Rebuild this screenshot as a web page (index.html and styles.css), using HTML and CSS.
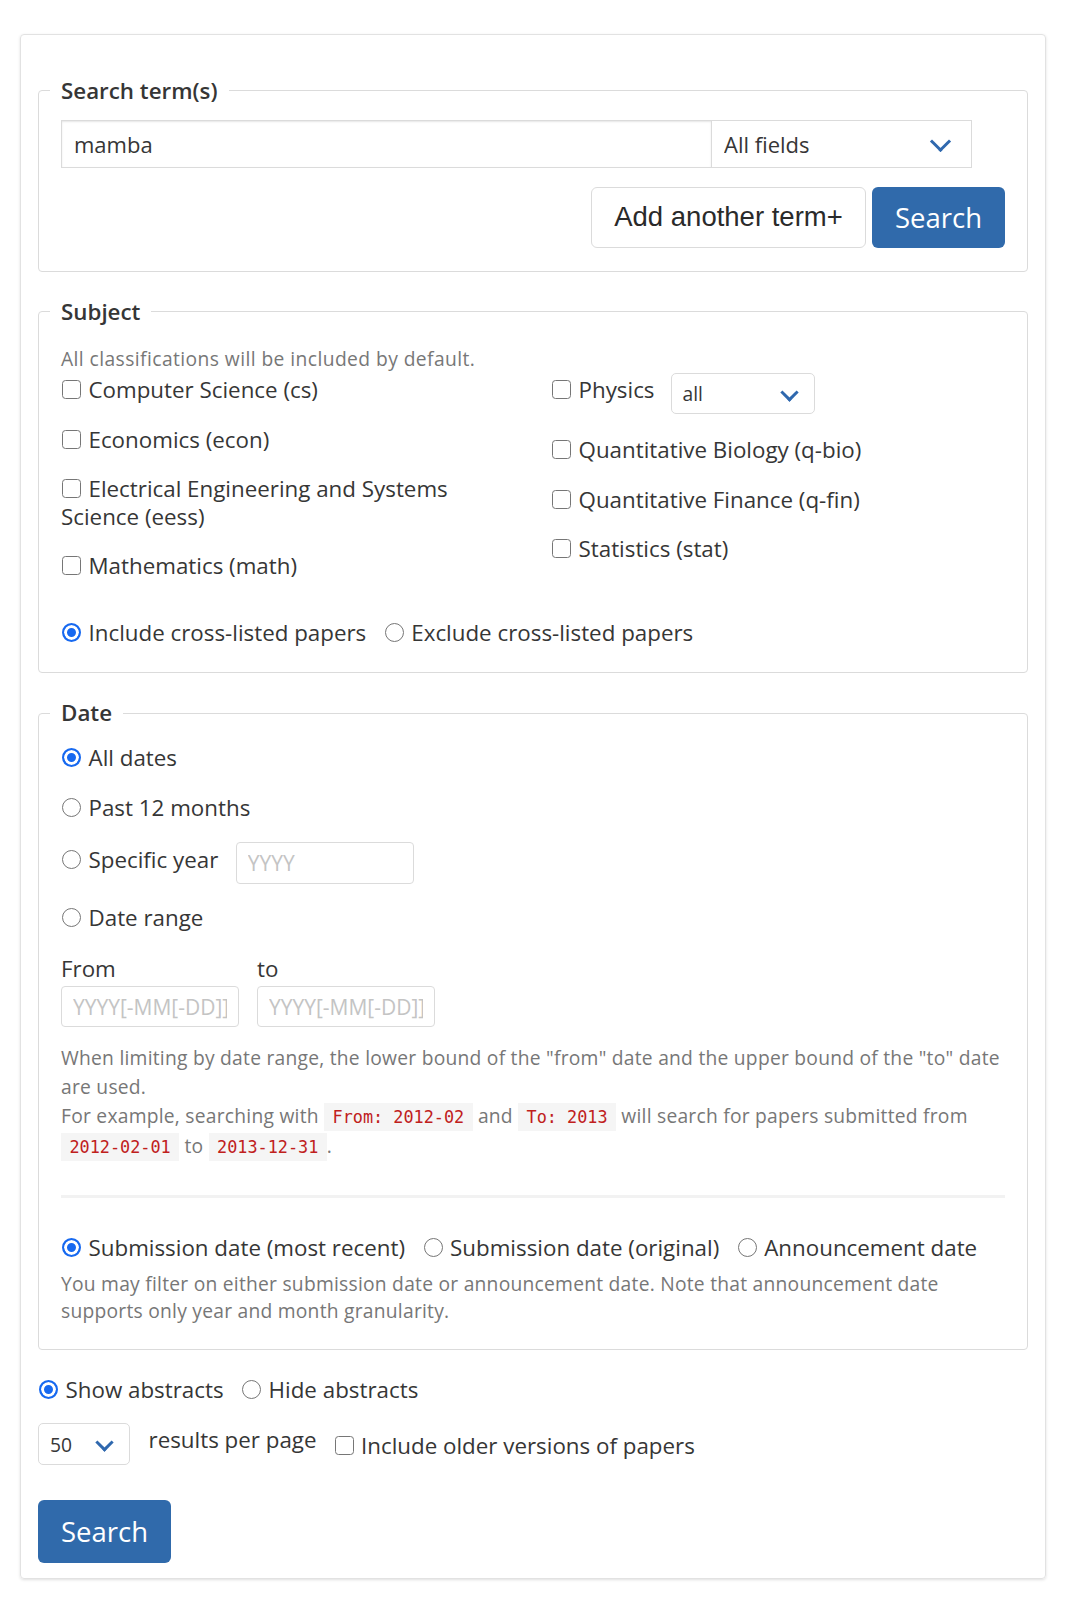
FILE: index.html
```html
<!DOCTYPE html>
<html lang="en">
<head>
<meta charset="utf-8">
<title>Advanced Search</title>
<link rel="stylesheet" href="styles.css">
</head>
<body>
<main class="card">
  <form class="search-form">
    <fieldset class="fs fs-terms">
      <legend>Search term(s)</legend>
      <div class="fs-body">
        <div class="term-row">
          <input class="input term-input" type="text" value="mamba">
          <span class="select select-field"><select><option>All fields</option></select></span>
        </div>
        <div class="button-row">
          <button type="button" class="btn btn-add">Add another term+</button>
          <button type="button" class="btn btn-primary">Search</button>
        </div>
      </div>
    </fieldset>

    <fieldset class="fs fs-subject">
      <legend>Subject</legend>
      <div class="fs-body">
        <p class="help help-subject">All classifications will be included by default.</p>
        <div class="subject-grid">
          <div class="subject-col subject-left">
            <label class="check"><input type="checkbox">Computer Science (cs)</label>
            <label class="check"><input type="checkbox">Economics (econ)</label>
            <label class="check"><input type="checkbox">Electrical Engineering and Systems Science (eess)</label>
            <label class="check"><input type="checkbox">Mathematics (math)</label>
          </div>
          <div class="subject-col subject-right">
            <div class="physics-row">
              <label class="check check-physics"><input type="checkbox">Physics</label>
              <span class="select select-small select-physics"><select><option>all</option></select></span>
            </div>
            <label class="check"><input type="checkbox">Quantitative Biology (q-bio)</label>
            <label class="check"><input type="checkbox">Quantitative Finance (q-fin)</label>
            <label class="check"><input type="checkbox">Statistics (stat)</label>
          </div>
        </div>
        <div class="radio-row cross-row">
          <label class="opt"><input type="radio" name="cross" checked>Include cross-listed papers</label>
          <label class="opt"><input type="radio" name="cross">Exclude cross-listed papers</label>
        </div>
      </div>
    </fieldset>

    <fieldset class="fs fs-date">
      <legend>Date</legend>
      <div class="fs-body">
        <div class="radio-line first-line"><label class="opt"><input type="radio" name="date" checked>All dates</label></div>
        <div class="radio-line"><label class="opt"><input type="radio" name="date">Past 12 months</label></div>
        <div class="year-row">
          <label class="opt opt-year"><input type="radio" name="date">Specific year</label>
          <input class="input date-input year-input" type="text" placeholder="YYYY">
        </div>
        <div class="radio-line range-line"><label class="opt"><input type="radio" name="date">Date range</label></div>
        <div class="range-fields">
          <div class="range-col">
            <span class="range-label">From</span>
            <input class="input date-input" type="text" placeholder="YYYY[-MM[-DD]]">
          </div>
          <div class="range-col">
            <span class="range-label">to</span>
            <input class="input date-input" type="text" placeholder="YYYY[-MM[-DD]]">
          </div>
        </div>
        <div class="help help-range">
          <p>When limiting by date range, the lower bound of the "from" date and the upper bound of the "to" date are used.</p>
          <p>For example, searching with <code>From: 2012-02</code> and <code>To: 2013</code> will search for papers submitted from <code>2012-02-01</code> to <code>2013-12-31</code>.</p>
        </div>
        <hr class="divider">
        <div class="radio-row">
          <label class="opt"><input type="radio" name="datetype" checked>Submission date (most recent)</label>
          <label class="opt"><input type="radio" name="datetype">Submission date (original)</label>
          <label class="opt"><input type="radio" name="datetype">Announcement date</label>
        </div>
        <p class="help help-note">You may filter on either submission date or announcement date. Note that announcement date supports only year and month granularity.</p>
      </div>
    </fieldset>

    <div class="radio-row abstracts-row">
      <label class="opt"><input type="radio" name="abs" checked>Show abstracts</label>
      <label class="opt"><input type="radio" name="abs">Hide abstracts</label>
    </div>

    <div class="results-row">
      <span class="select select-small select-size"><select><option>50</option></select></span>
      <span class="results-label">results per page</span>
      <label class="check check-older"><input type="checkbox">Include older versions of papers</label>
    </div>

    <button type="button" class="btn btn-primary btn-bottom">Search</button>
  </form>
</main>
</body>
</html>
```

FILE: styles.css
```css
* { box-sizing: border-box; }

body {
  margin: 0;
  padding: 34px 20px 37px;
  font-family: "Open Sans", "DejaVu Sans", sans-serif;
  font-size: 22.35px;
  line-height: 27.5px;
  color: #363636;
  background: #fff;
}

.card {
  border: 1px solid #e2e2e2;
  border-radius: 4px;
  box-shadow: 0 1px 3px rgba(0, 0, 0, 0.13);
  padding: 42px 17px 15px;
}

.search-form { margin: 0; }

/* fieldsets */
.fs {
  margin: 0 0 26px;
  border: 1px solid #dbdbdb;
  border-radius: 4px;
  padding: 0 22px 23px 11px;
  min-width: 0;
}
.fs legend {
  padding: 0 11px;
  font-size: 22.35px;
  font-weight: 600;
  line-height: 27.5px;
}
.fs-body { padding-left: 11px; }
.fs-subject { padding-bottom: 26px; }
.fs-date { padding-bottom: 24px; }

/* inputs & selects */
.input {
  font-family: inherit;
  color: #363636;
  background: #fff;
  border: 1px solid #dbdbdb;
  outline: none;
}
.input::placeholder { color: #c4c4c4; }

.term-row { display: flex; margin-top: 15px; }
.term-input {
  width: 651px;
  height: 48px;
  padding: 0 12px;
  font-size: 22px;
  border-radius: 0;
  box-shadow: inset 0 1px 2px rgba(10, 10, 10, 0.1);
}

.select { position: relative; display: inline-block; }
.select select {
  -webkit-appearance: none;
  appearance: none;
  width: 100%;
  height: 100%;
  border: 1px solid #dbdbdb;
  background: #fff;
  font-family: inherit;
  color: #363636;
  outline: none;
}
.select::after {
  content: "";
  position: absolute;
  top: 50%;
  width: 12px;
  height: 12px;
  margin-top: -10px;
  border: 3px solid #2f68ae;
  border-top: 0;
  border-right: 0;
  transform: rotate(-45deg);
  pointer-events: none;
}

.select-field { width: 261px; height: 48px; margin-left: -1px; }
.select-field select { font-size: 22px; padding: 0 12px; border-radius: 0; }
.select-field::after { right: 24px; }

.select-small select { font-size: 19.25px; border-radius: 5px; padding: 0 10px; }
.select-small::after { width: 10px; height: 10px; margin-top: -8px; }
.select-physics { width: 144px; height: 41px; margin-left: 17px; }
.select-physics::after { right: 19px; }
.select-size { width: 92px; height: 42px; }
.select-size select { padding: 0 11px; }
.select-size::after { right: 19px; }

/* buttons */
.button-row {
  display: flex;
  justify-content: flex-end;
  gap: 6px;
  margin-top: 19px;
}
.btn {
  height: 61px;
  border-radius: 6px;
  cursor: pointer;
}
.btn-add {
  width: 275px;
  border: 1px solid #dbdbdb;
  background: #fff;
  color: #2a2a2a;
  font-family: "Liberation Sans", Arial, sans-serif;
  font-size: 27.5px;
}
.btn-primary {
  width: 133px;
  border: 0;
  background: #306aab;
  color: #fff;
  font-family: "Open Sans", sans-serif;
  font-size: 27.5px;
}
.btn-bottom { height: 63px; margin-top: 35px; display: block; }

/* help text */
.help {
  margin: 0;
  color: #777;
  font-size: 19.25px;
  letter-spacing: 0.24px;
  line-height: 28.9px;
}
.help p { margin: 0; }
.help-subject { margin-top: 19.5px; letter-spacing: 0.42px; }
.help-range { margin-top: 16.5px; }
.help-note { margin-top: 8.5px; line-height: 27.8px; }

code {
  font-family: "DejaVu Sans Mono", "Liberation Mono", monospace;
  font-size: 0.875em;
  letter-spacing: 0;
  color: #c0201c;
  background: #f5f5f5;
  padding: 0.22em 0.5em 0.25em;
}

/* checkboxes & radios */
.check, .opt {
  line-height: 27.5px;
}
.check input, .opt input {
  -webkit-appearance: none;
  appearance: none;
  display: inline-block;
  width: 19px;
  height: 19px;
  margin: 0 7.5px -1px 1px;
  vertical-align: baseline;
  border: 1.5px solid #767676;
  background: #fff;
}
.check input { border-radius: 3.5px; }
.opt input { border-radius: 50%; }
.opt input:checked {
  border: 2px solid #1769f0;
  background: #1769f0;
  box-shadow: inset 0 0 0 3px #fff;
}

.subject-grid {
  display: grid;
  grid-template-columns: 490px 1fr;
}
.subject-col { display: flex; flex-direction: column; align-items: flex-start; }
.subject-left .check { padding-right: 30px; }
.subject-col .check { display: block; padding-top: 3px; margin-bottom: 19px; }
.physics-row { display: flex; align-items: flex-start; margin-bottom: 19px; }
.subject-col .physics-row .check { margin-bottom: 0; }

.radio-row { display: flex; flex-wrap: wrap; }
.radio-row .opt { margin-right: 17.5px; }
.cross-row { margin-top: 20px; }

.radio-line { margin-top: 23px; }
.radio-line.first-line { margin-top: 17px; }
.range-line { margin-top: 20.5px; }

.year-row { display: flex; align-items: flex-start; margin-top: 20px; }
.opt-year { padding-top: 4px; }
.date-input {
  width: 178px;
  height: 41px;
  padding: 0 11px;
  font-size: 21px;
  border-radius: 4px;
}
.year-input { height: 42px; margin-left: 17.5px; }

.range-fields { display: flex; gap: 18px; margin-top: 23px; }
.range-col { display: flex; flex-direction: column; }
.range-label { line-height: 27.5px; margin-bottom: 4px; }

.divider {
  border: 0;
  height: 3px;
  background: #f2f2f2;
  margin: 33px 0 36px;
}

.abstracts-row { margin-top: 0; }
.results-row { display: flex; align-items: flex-start; margin-top: 19.5px; }
.results-label { line-height: 27.5px; margin: 2.5px 0 0 18.5px; }
.check-older { margin: 8.5px 0 0 17px; }
```
